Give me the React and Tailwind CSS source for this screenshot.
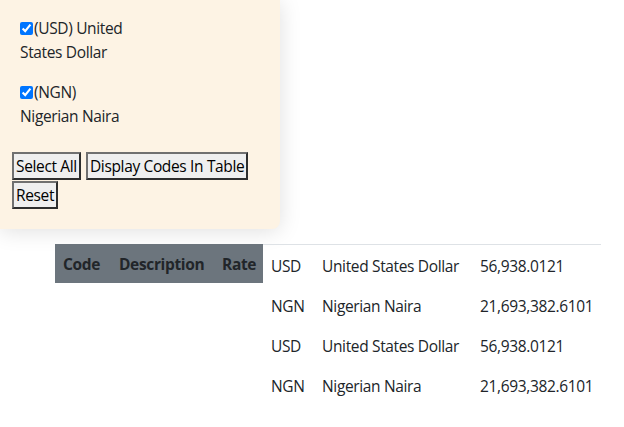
import React from 'react';

const currencies = [
    { code: 'USD', name: 'United States Dollar', first: 'United', rest: 'States Dollar', rate: '56,938.0121' },
    { code: 'NGN', name: 'Nigerian Naira', first: '', rest: 'Nigerian Naira', rate: '21,693,382.6101' },
];

const rows = [...currencies, ...currencies];

const Btn = ({ children }) => (
    <button className="border-2 border-solid border-t-[#707070] border-l-[#707070] border-b-[#2e2e2e] border-r-[#2e2e2e] bg-[#efefef] px-[2px] h-[28px] leading-[22px] text-[#000] whitespace-nowrap">
        {children}
    </button>
);

export default function App() {
    return (
        <div className="min-h-[427px] bg-white text-[15.5px] text-[#212529] font-['Open_Sans',sans-serif] tracking-[-0.35px]">
            <div className="w-[280px] bg-[#fdf3e4] rounded-br-lg shadow-[0_2px_22px_rgba(0,0,0,0.13)] pt-[16px] pb-[20px] px-[12px]">
                {currencies.map((c) => (
                    <div key={c.code} className="ml-[8px] mb-[16px] leading-[24px] whitespace-nowrap">
                        <input type="checkbox" checked readOnly className="w-[13px] h-[13px] align-[-1px] mr-[1px]" />
                        ({c.code}){c.first ? ` ${c.first}` : ''}
                        <br />
                        {c.rest}
                    </div>
                ))}
                <div className="flex flex-wrap gap-x-[5px] gap-y-[1px] mt-[24px]">
                    <Btn>Select All</Btn>
                    <Btn>Display Codes In Table</Btn>
                    <Btn>Reset</Btn>
                </div>
            </div>

            <div className="flex ml-[55px] mt-[15px]">
                <div className="flex shrink-0 h-[39px] pt-[3px] items-center bg-[#6c757d] font-bold text-[#212529] whitespace-nowrap">
                    <div className="w-[56px] px-2">Code</div>
                    <div className="w-[103px] px-2">Description</div>
                    <div className="w-[49px] px-2">Rate</div>
                </div>
                <div className="border-t border-[#dee2e6] w-[338px] shrink-0">
                    {rows.map((r, i) => (
                        <div key={i} className="flex h-[40px] pt-[3px] items-center whitespace-nowrap">
                            <div className="w-[51px] shrink-0 px-2">{r.code}</div>
                            <div className="w-[158px] shrink-0 px-2">{r.name}</div>
                            <div className="shrink-0 px-2">{r.rate}</div>
                        </div>
                    ))}
                </div>
            </div>
        </div>
    );
}
